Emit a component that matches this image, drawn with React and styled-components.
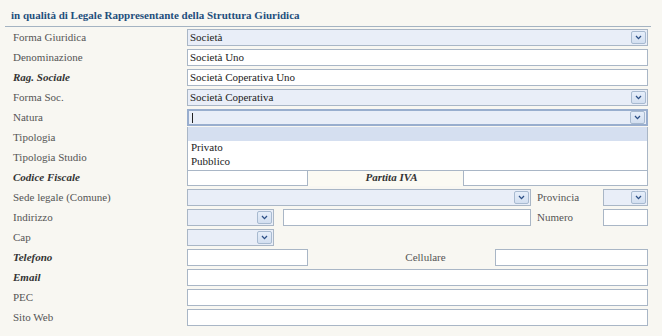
import React from "react";
import styled, { createGlobalStyle } from "styled-components";

const Global = createGlobalStyle`
  html, body { margin: 0; padding: 0; background: #f8f7f2; }
  body { font-family: "Liberation Serif", "Times New Roman", serif; font-size: 11px; color: #555; }
`;

const Page = styled.div`
  width: 662px;
  height: 336px;
  background: #f8f7f2;
  padding-top: 8px;
  box-sizing: border-box;
`;

const Title = styled.div`
  margin: 0 11px 0 5px;
  padding: 0 0 4px 6px;
  border-bottom: 1px solid #a4b3c2;
  color: #1f4f7d;
  font-weight: bold;
  font-size: 11px;
  line-height: 14px;
`;

const Form = styled.div`
  display: flex;
  flex-direction: column;
`;

const Row = styled.div`
  display: flex;
  align-items: center;
  height: 20px;
  position: relative;
  z-index: ${(p) => (p.$top ? 5 : "auto")};
`;

const Label = styled.div`
  width: 174px;
  padding-left: 13px;
  flex: none;
  color: ${(p) => (p.$strong ? "#333" : "#555")};
  font-weight: ${(p) => (p.$strong ? "bold" : "normal")};
  font-style: ${(p) => (p.$strong ? "italic" : "normal")};
`;

const Field = styled.div`
  display: flex;
  align-items: center;
  width: 461px;
  flex: none;
  position: relative;
`;

const Box = styled.div`
  box-sizing: border-box;
  height: 17px;
  width: ${(p) => (p.$w ? `${p.$w}px` : "100%")};
  flex: none;
  display: flex;
  align-items: center;
  border: ${(p) => (p.$focus ? "2px solid #99aece" : "1px solid #a9b6c6")};
  background: ${(p) => (p.$select ? "#e9eef8" : "#ffffff")};
  padding-left: 2px;
  color: #222;
  white-space: nowrap;
  overflow: hidden;
`;

const Value = styled.span`
  flex: 1;
`;

const Caret = styled.span`
  display: inline-block;
  width: 1px;
  height: 10px;
  background: #222;
  margin-left: 1px;
  vertical-align: middle;
`;

const Btn = styled.span`
  box-sizing: border-box;
  width: 15px;
  height: 13px;
  margin-right: 1px;
  flex: none;
  display: flex;
  align-items: center;
  justify-content: center;
  border: 1px solid #a8bad0;
  border-radius: 2px;
  background: linear-gradient(#e6eefa, #d3dff0);
`;

const Chevron = () => (
  <svg width="7" height="5" viewBox="0 0 7 5">
    <path d="M1 1 L3.5 3.6 L6 1" fill="none" stroke="#2c4f86" strokeWidth="1.3" />
  </svg>
);

const Select = ({ value, w, focus, caret }) => (
  <Box $select $w={w} $focus={focus}>
    <Value>{caret ? <Caret /> : value}</Value>
    <Btn>
      <Chevron />
    </Btn>
  </Box>
);

const Input = ({ value, w }) => (
  <Box $w={w}>
    <Value>{value}</Value>
  </Box>
);

const Gap = styled.div`
  width: ${(p) => p.$w}px;
  flex: none;
`;

const SideLabel = styled.div`
  width: ${(p) => p.$w}px;
  flex: none;
  box-sizing: border-box;
  padding-left: ${(p) => p.$pl || 0}px;
  text-align: ${(p) => (p.$center ? "center" : "left")};
  color: ${(p) => (p.$strong ? "#333" : "#555")};
  font-weight: ${(p) => (p.$strong ? "bold" : "normal")};
  font-style: ${(p) => (p.$strong ? "italic" : "normal")};
  background: ${(p) => (p.$cell ? "#fbfaf3" : "transparent")};
  height: ${(p) => (p.$cell ? "17px" : "auto")};
  line-height: ${(p) => (p.$cell ? "17px" : "normal")};
`;

const List = styled.div`
  position: absolute;
  top: 18px;
  left: 0;
  width: 461px;
  box-sizing: border-box;
  height: 44px;
  background: #fff;
  border: 1px solid #a9b6c6;
  border-top: none;
  z-index: 5;
  color: #222;
`;

const Option = styled.div`
  height: ${(p) => (p.$active ? "14px" : "14px")};
  line-height: 13px;
  padding-left: 3px;
  background: ${(p) => (p.$active ? "#d5dff0" : "transparent")};
`;

export default function App() {
  return (
    <Page>
      <Global />
      <Title>in qualità di Legale Rappresentante della Struttura Giuridica</Title>
      <Form>
        <Row>
          <Label>Forma Giuridica</Label>
          <Field><Select value="Società" /></Field>
        </Row>
        <Row>
          <Label>Denominazione</Label>
          <Field><Input value="Società Uno" /></Field>
        </Row>
        <Row>
          <Label $strong>Rag. Sociale</Label>
          <Field><Input value="Società Coperativa Uno" /></Field>
        </Row>
        <Row>
          <Label>Forma Soc.</Label>
          <Field><Select value="Società Coperativa" /></Field>
        </Row>
        <Row $top>
          <Label>Natura</Label>
          <Field>
            <Select focus caret />
            <List>
              <Option $active />
              <Option>Privato</Option>
              <Option>Pubblico</Option>
            </List>
          </Field>
        </Row>
        <Row>
          <Label>Tipologia</Label>
          <Field><Select /></Field>
        </Row>
        <Row>
          <Label>Tipologia Studio</Label>
          <Field><Select /></Field>
        </Row>
        <Row>
          <Label $strong>Codice Fiscale</Label>
          <Field>
            <Input w={121} />
            <SideLabel $w={155} $center $strong $cell $pl={12}>Partita IVA</SideLabel>
            <Input w={185} />
          </Field>
        </Row>
        <Row>
          <Label>Sede legale (Comune)</Label>
          <Field>
            <Select w={344} />
            <SideLabel $w={72} $pl={6}>Provincia</SideLabel>
            <Select w={45} />
          </Field>
        </Row>
        <Row>
          <Label>Indirizzo</Label>
          <Field>
            <Select w={87} />
            <Gap $w={9} />
            <Input w={248} />
            <SideLabel $w={72} $pl={6}>Numero</SideLabel>
            <Input w={45} />
          </Field>
        </Row>
        <Row>
          <Label>Cap</Label>
          <Field><Select w={87} /></Field>
        </Row>
        <Row>
          <Label $strong>Telefono</Label>
          <Field>
            <Input w={121} />
            <SideLabel $w={187} $center $pl={48}>Cellulare</SideLabel>
            <Input w={153} />
          </Field>
        </Row>
        <Row>
          <Label $strong>Email</Label>
          <Field><Input /></Field>
        </Row>
        <Row>
          <Label>PEC</Label>
          <Field><Input /></Field>
        </Row>
        <Row>
          <Label>Sito Web</Label>
          <Field><Input /></Field>
        </Row>
      </Form>
    </Page>
  );
}
